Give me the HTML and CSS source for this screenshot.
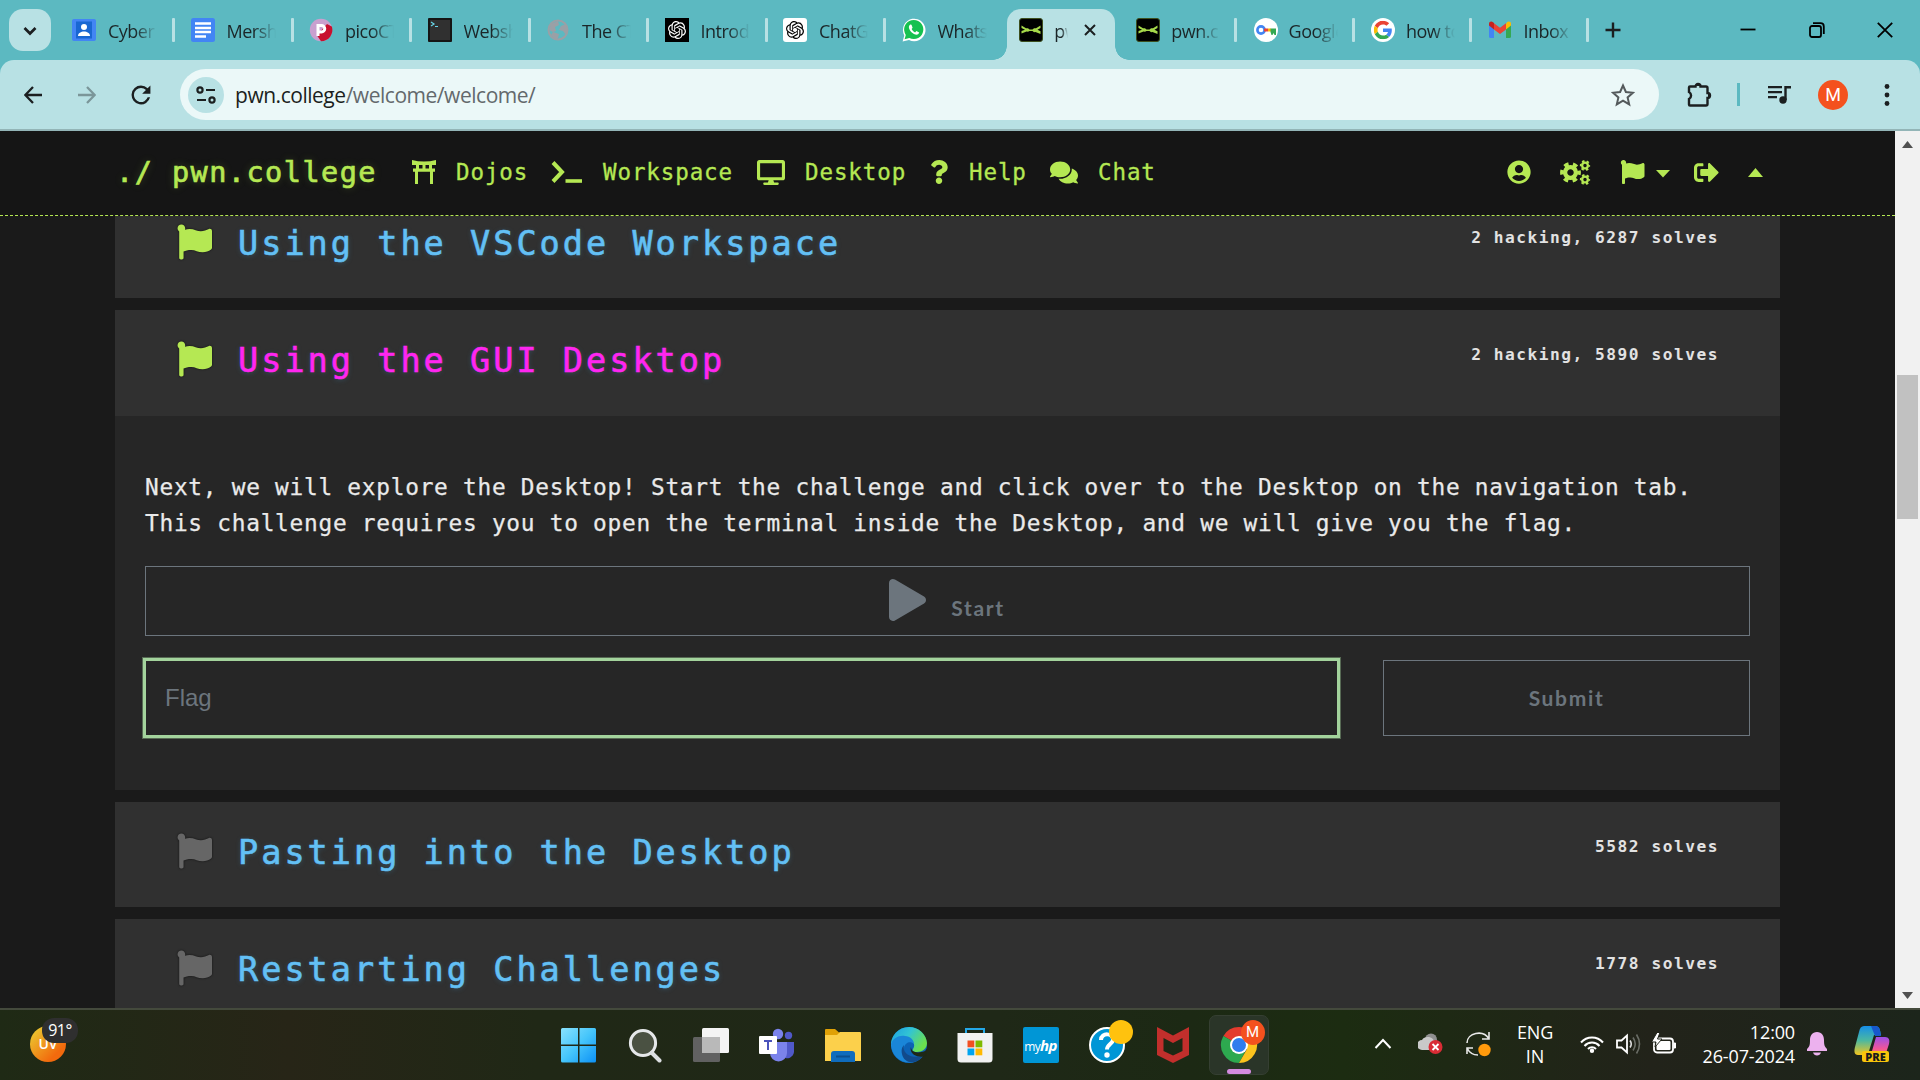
FILE: index.html
```html
<!DOCTYPE html>
<html lang="en">
<head>
<meta charset="utf-8">
<title>pwn.college</title>
<link rel="stylesheet" href="styles.css">
</head>
<body>
<svg class="defs" width="0" height="0" aria-hidden="true">
  <symbol id="flag" viewBox="0 0 512 512"><path d="M349.565 98.783C295.978 98.783 251.721 64 184.348 64c-24.955 0-47.309 4.384-68.045 12.013a55.947 55.947 0 0 0 3.586-23.562C118.117 24.015 94.806 1.206 66.338.048 34.345-1.254 8 24.296 8 56c0 19.026 9.497 35.825 24 45.945V488c0 13.255 10.745 24 24 24h16c13.255 0 24-10.745 24-24v-94.4c28.311-12.064 63.582-22.122 114.435-22.122 53.588 0 97.844 34.783 165.217 34.783 48.169 0 86.667-16.294 122.505-40.858C506.84 359.452 512 349.571 512 339.045v-243.1c0-23.393-24.269-38.87-45.485-29.016-34.338 15.948-76.454 31.854-116.95 31.854z"/></symbol>
  <symbol id="knot" viewBox="0 0 24 24"><path d="M22.2819 9.8211a5.9847 5.9847 0 0 0-.5157-4.9108 6.0462 6.0462 0 0 0-6.5098-2.9A6.0651 6.0651 0 0 0 4.9807 4.1818a5.9847 5.9847 0 0 0-3.9977 2.9 6.0462 6.0462 0 0 0 .7427 7.0966 5.98 5.98 0 0 0 .511 4.9107 6.051 6.051 0 0 0 6.5146 2.9001A5.9847 5.9847 0 0 0 13.2599 24a6.0557 6.0557 0 0 0 5.7718-4.2058 5.9894 5.9894 0 0 0 3.9977-2.9001 6.0557 6.0557 0 0 0-.7475-7.0729zm-9.022 12.6081a4.4755 4.4755 0 0 1-2.8764-1.0408l.1419-.0804 4.7783-2.7582a.7948.7948 0 0 0 .3927-.6813v-6.7369l2.02 1.1686a.071.071 0 0 1 .038.052v5.5826a4.504 4.504 0 0 1-4.4945 4.4944zm-9.6607-4.1254a4.4708 4.4708 0 0 1-.5346-3.0137l.142.0852 4.783 2.7582a.7712.7712 0 0 0 .7806 0l5.8428-3.3685v2.3324a.0804.0804 0 0 1-.0332.0615L9.74 19.9502a4.4992 4.4992 0 0 1-6.1408-1.6464zM2.3408 7.8956a4.485 4.485 0 0 1 2.3655-1.9728V11.6a.7664.7664 0 0 0 .3879.6765l5.8144 3.3543-2.0201 1.1685a.0757.0757 0 0 1-.071 0l-4.8303-2.7865A4.504 4.504 0 0 1 2.3408 7.872zm16.5963 3.8558L13.1038 8.364 15.1192 7.2a.0757.0757 0 0 1 .071 0l4.8303 2.7913a4.4944 4.4944 0 0 1-.6765 8.1042v-5.6772a.79.79 0 0 0-.407-.667zm2.0107-3.0231l-.142-.0852-4.7735-2.7818a.7759.7759 0 0 0-.7854 0L9.409 9.2297V6.8974a.0662.0662 0 0 1 .0284-.0615l4.8303-2.7866a4.4992 4.4992 0 0 1 6.6802 4.66zM8.3065 12.863l-2.02-1.1638a.0804.0804 0 0 1-.038-.0567V6.0742a4.4992 4.4992 0 0 1 7.3757-3.4537l-.142.0805L8.704 5.459a.7948.7948 0 0 0-.3927.6813zm1.0976-2.3654l2.602-1.4998 2.6069 1.4998v2.9994l-2.5974 1.4997-2.6067-1.4997Z"/></symbol>
  <symbol id="pwn" viewBox="0 0 24 24"><rect x=".5" y=".5" width="23" height="23" rx="2.500" fill="#000" stroke="#3d4f1e"/><path d="M2.500 7.500 7 10.200h2l1.500 1.200h3l1.500-1.200h2l4.500-2.700v2.500l-3 1.700 3 1.500v2.700l-5-2-1.500.3-1.500-1.200h-3L9 13.700l-1.500-.3-5 2V13l3.500-1.200L2.500 10z" fill="#a6d94a"/></symbol>
  <symbol id="gear" viewBox="-12 -12 24 24"><circle r="6.200" fill="none" stroke="currentColor" stroke-width="5"/><circle r="9.800" fill="none" stroke="currentColor" stroke-width="4.200" stroke-dasharray="5.200 5.063" stroke-dashoffset="2.600"/></symbol>
</svg>

<header class="browser">
  <div class="tabstrip">
    <button class="tab-search"><svg width="42" height="42" viewBox="0 0 42 42"><path d="M15.500 19l5.500 5.500 5.500-5.500" fill="none" stroke="#1b1f20" stroke-width="2.700"/></svg></button>
    <div class="tab"><svg class="fav" viewBox="0 0 24 24"><rect y="1" width="24" height="22" rx="2" fill="#4285f4"/><rect x="4" y="3.500" width="16" height="17" fill="#1967d2"/><circle cx="12" cy="9" r="3" fill="#fff"/><path d="M6 18c0-6 12-6 12 0z" fill="#fff"/></svg><span class="label">Cyber</span></div>
    <div class="tab"><svg class="fav" viewBox="0 0 24 24"><rect width="24" height="24" rx="2.500" fill="#4285f4"/><path d="M4 5.500h16M4 10h16M4 14h16M4 18.500h11" stroke="#fff" stroke-width="2.300"/></svg><span class="label">Mersh</span></div>
    <div class="tab"><svg class="fav" viewBox="0 0 24 24"><circle cx="12" cy="12" r="11.200" fill="#c9a0cf"/><path d="M8 17.500L18 6l4.800 2.500A11.200 11.200 0 0 1 12 23.200z" fill="#c8102e"/><path d="M9 18V7.500h3.500a3.200 3.200 0 0 1 0 6.500H9" fill="none" stroke="#fff" stroke-width="3"/></svg><span class="label">picoCT</span></div>
    <div class="tab"><svg class="fav" viewBox="0 0 24 24"><rect width="24" height="24" rx="1" fill="#151515"/><rect x="2" y="2" width="20" height="20" fill="#303030"/><path d="M3 4l3 2-3 2M7 8.500h3" fill="none" stroke="#68d4e6" stroke-width="1.200"/></svg><span class="label">Websh</span></div>
    <div class="tab"><svg class="fav" viewBox="0 0 24 24"><circle cx="12" cy="12" r="9.500" fill="none" stroke="#9aa0a6" stroke-width="2"/><path d="M5 6l7-3 1 4-4 2 1 4-3 1-4-2zM15 8l5-2 2 6-2 5-3-4-4-1zM7 14l6 2-1 4-2 2-5-5z" fill="#9aa0a6"/></svg><span class="label">The CT</span></div>
    <div class="tab"><svg class="fav" viewBox="0 0 24 24"><rect width="24" height="24"/><svg x="3" y="3" width="18" height="18" fill="#fff"><use href="#knot"/></svg></svg><span class="label">Introd</span></div>
    <div class="tab"><svg class="fav" viewBox="0 0 24 24"><rect width="24" height="24" rx="3" fill="#fff"/><svg x="3" y="3" width="18" height="18"><use href="#knot"/></svg></svg><span class="label">ChatG</span></div>
    <div class="tab no-sep"><svg class="fav" viewBox="0 0 24 24"><path d="M.6 23.400l1.700-6A11.300 11.300 0 1 1 7 22z" fill="#fff"/><path d="M2.600 21.300l1.200-4.400A9.600 9.600 0 1 1 7.300 20z" fill="#16c150"/><path d="M8.200 6.500c-3 2.300-.3 6.500 2.300 8.500 2.800 2.200 5.700 2.500 6.700-.5l-2.800-1.500-1.300 1.400c-1.700-.7-2.700-1.800-3.500-3.300l1-1.300-1.100-3z" fill="#fff"/></svg><span class="label">Whats</span></div>
    <div class="tab active"><svg class="fav"><use href="#pwn"/></svg><span class="label">pw</span><svg class="tab-x" width="12" height="12" viewBox="0 0 12 12"><path d="M1 1l10 10M11 1L1 11" stroke="#1b1f20" stroke-width="2"/></svg></div>
    <div class="tab late"><svg class="fav"><use href="#pwn"/></svg><span class="label">pwn.c</span></div>
    <div class="tab late"><svg class="fav" viewBox="0 0 24 24"><circle cx="12" cy="12" r="12" fill="#fff"/><circle cx="7" cy="12" r="3.600" fill="none" stroke="#4285f4" stroke-width="2.600"/><path d="M10 12h4" stroke="#ea4335" stroke-width="3"/><path d="M14 12h3" stroke="#fbbc04" stroke-width="3"/><path d="M16.500 10.500H22V17h-1.500l-1-2-1 2h-1l-1-3z" fill="#34a853"/></svg><span class="label">Google</span></div>
    <div class="tab late"><svg class="fav" viewBox="0 0 24 24"><circle cx="12" cy="12" r="12" fill="#fff"/><svg x="2.800" y="2.800" width="18.400" height="18.400" viewBox="0 0 48 48"><path fill="#EA4335" d="M24 9.500c3.540 0 6.710 1.220 9.210 3.600l6.850-6.850C35.900 2.380 30.470 0 24 0 14.620 0 6.510 5.380 2.560 13.220l7.980 6.190C12.430 13.720 17.740 9.500 24 9.500z"/><path fill="#4285F4" d="M46.980 24.550c0-1.570-.15-3.090-.38-4.550H24v9.020h12.940c-.58 2.960-2.260 5.480-4.780 7.180l7.730 6c4.510-4.180 7.090-10.360 7.090-17.650z"/><path fill="#FBBC05" d="M10.530 28.590c-.48-1.450-.76-2.990-.76-4.590s.27-3.140.76-4.590l-7.980-6.190C.92 16.460 0 20.120 0 24c0 3.880.92 7.540 2.560 10.780l7.970-6.190z"/><path fill="#34A853" d="M24 48c6.480 0 11.930-2.130 15.890-5.810l-7.730-6c-2.150 1.450-4.920 2.300-8.160 2.300-6.260 0-11.570-4.220-13.470-9.910l-7.980 6.190C6.510 42.620 14.620 48 24 48z"/></svg></svg><span class="label">how to</span></div>
    <div class="tab late"><svg class="fav" viewBox="0 0 24 24"><path d="M1 6v12.500Q1 20 2.500 20H6V9z" fill="#4285f4"/><path d="M18 9v11h3.500q1.500 0 1.500-1.500V6z" fill="#34a853"/><path d="M18 6v5.500l5-4V6c0-2.500-2.500-3-4-1.800z" fill="#fbbc04"/><path d="M6 5.200l6 4.600 6-4.600v6.300L12 16l-6-4.500z" fill="#ea4335"/><path d="M1 6v1.500l5 4V5L5 4.200C3.500 3 1 3.500 1 6z" fill="#c5221f"/></svg><span class="label">Inbox</span></div>
    <svg class="new-tab" width="16" height="16" viewBox="0 0 16 16"><path d="M8 .5v15M.5 8h15" stroke="#1b1f20" stroke-width="2.400"/></svg>
    <div class="win-controls">
      <svg width="16" height="16" viewBox="0 0 16 16"><path d="M.5 7.500h15" stroke="#000" stroke-width="1.800"/></svg>
      <svg width="16" height="16" viewBox="0 0 16 16"><rect x="1" y="4" width="11" height="11" rx="2" fill="none" stroke="#000" stroke-width="1.800"/><path d="M4 1.200h7.500q3.300 0 3.300 3.300V12" fill="none" stroke="#000" stroke-width="1.800"/></svg>
      <svg width="16" height="16" viewBox="0 0 16 16"><path d="M.8.800l14.400 14.400M15.200.800L.8 15.200" stroke="#000" stroke-width="1.800"/></svg>
    </div>
  </div>
  <div class="toolbar">
    <svg class="back" width="18" height="18" viewBox="0 0 18 18"><path d="M18 9H1.500M9 1L1.300 9 9 17" fill="none" stroke="#1b1f20" stroke-width="2.300"/></svg>
    <svg class="forward" width="18" height="18" viewBox="0 0 18 18"><path d="M0 9h16.500M9 1l7.700 8L9 17" fill="none" stroke="#7b9699" stroke-width="2.300"/></svg>
    <svg class="reload" width="20" height="20" viewBox="3.500 3.500 17 17"><path fill="#1b1f20" d="M17.650 6.350A7.958 7.958 0 0 0 12 4a8 8 0 1 0 7.730 10h-2.080A6 6 0 1 1 12 6c1.660 0 3.140.69 4.220 1.780L13 11h7V4z"/></svg>
    <div class="omnibox">
      <span class="site-info"><svg width="20" height="20" viewBox="0 0 20 20" fill="none" stroke="#1b1f20" stroke-width="2.200"><circle cx="4" cy="5" r="2.600"/><path d="M10 5h9M1 15h9"/><circle cx="16" cy="15" r="2.600"/></svg></span>
      <span class="url">pwn.college<span class="path">/welcome/welcome/</span></span>
      <svg class="star" width="24" height="24" viewBox="0 0 24 24"><path d="M12 2.500l2.900 6.500 7.100.7-5.400 4.700 1.600 7L12 17.700l-6.200 3.700 1.600-7L2 9.700 9.100 9z" fill="none" stroke="#545a5c" stroke-width="2"/></svg>
    </div>
    <svg class="puzzle" width="25" height="25" viewBox="0 0 25 25"><path d="M2 5.500Q2 4.500 3 4.500h5.500a2.500 2.500 0 0 1 5 0H19q1.500 0 1.500 1.500v5a2.500 2.500 0 0 1 0 5v6q0 1.500-1.500 1.500H3q-1 0-1-1v-5.500a4 4 0 0 0 0-7z" fill="none" stroke="#1b1f20" stroke-width="2.400"/><path d="M8.500 4a2.300 2.300 0 0 1 4.600 0zM21 11a2.400 2.400 0 0 1 0 5z" fill="#1b1f20"/></svg>
    <span class="bar-sep"></span>
    <svg class="music" width="23" height="20" viewBox="0 0 23 20"><path d="M0 2.200h14M0 7.200h14M0 12.200h9" stroke="#1b1f20" stroke-width="2.200"/><path d="M17.500 15V2.200H23" fill="none" stroke="#1b1f20" stroke-width="2.400"/><circle cx="15" cy="15" r="3.700" fill="#1b1f20"/></svg>
    <span class="avatar">M</span>
    <svg class="dots" width="6" height="22" viewBox="0 0 6 22" fill="#1b1f20"><circle cx="3" cy="2.500" r="2.400"/><circle cx="3" cy="11" r="2.400"/><circle cx="3" cy="19.500" r="2.400"/></svg>
  </div>
</header>

<div class="viewport">
  <div class="page">
    <nav class="nav">
      <a class="logo">./ pwn.college</a>
      <svg class="i-torii" width="24" height="24" viewBox="0 0 24 24" fill="currentColor"><path d="M0 0q12 3 24 0v5H0zM4 4h3v5H4zM10.500 4h3v5h-3zM17 4h3v5h-3zM1 8.500h22v3.300H1zM3 11h3v13H3zM18 11h3v13h-3z"/></svg><span class="t-dojos">Dojos</span>
      <svg class="i-term" width="32" height="24" viewBox="0 0 32 24" fill="none" stroke="currentColor"><path d="M2 2.500l9 9.500-9 9.500" stroke-width="4"/><path d="M14.500 21h16.500" stroke-width="3.600"/></svg><span class="t-work">Workspace</span>
      <svg class="i-desk" width="28" height="25" viewBox="0 0 576 512" fill="currentColor"><path d="M528 0H48C21.500 0 0 21.500 0 48v320c0 26.500 21.500 48 48 48h192l-16 48h-72c-13.300 0-24 10.700-24 24s10.700 24 24 24h272c13.300 0 24-10.700 24-24s-10.700-24-24-24h-72l-16-48h192c26.500 0 48-21.500 48-48V48c0-26.500-21.500-48-48-48zm-16 352H64V64h448v288z"/></svg><span class="t-desk">Desktop</span>
      <svg class="i-help" width="18" height="24" viewBox="0 0 384 512" fill="currentColor"><path d="M202.021 0C122.202 0 70.503 32.703 29.914 91.026c-7.363 10.580-5.093 25.086 5.178 32.874l43.138 32.709c10.373 7.865 25.132 6.026 33.253-4.148 25.049-31.381 43.630-49.449 82.757-49.449 30.764 0 68.816 19.799 68.816 49.631 0 22.552-18.617 34.134-48.993 51.164-35.423 19.860-82.299 44.576-82.299 106.405V320c0 13.255 10.745 24 24 24h72.471c13.255 0 24-10.745 24-24v-5.773c0-42.860 125.268-44.645 125.268-160.627C377.504 66.256 286.902 0 202.021 0zM192 373.459c-38.196 0-69.271 31.075-69.271 69.271 0 38.195 31.075 69.270 69.271 69.270s69.271-31.075 69.271-69.271-31.075-69.270-69.271-69.270z"/></svg><span class="t-help">Help</span>
      <svg class="i-chat" width="28" height="25" viewBox="0 0 576 512" fill="currentColor"><path d="M416 192c0-88.400-93.100-160-208-160S0 103.600 0 192c0 34.300 14.100 65.900 38 92-13.400 30.200-35.500 54.200-35.800 54.500-2.200 2.300-2.800 5.700-1.500 8.700S4.800 352 8 352c36.600 0 66.900-12.300 88.700-25 32.200 15.700 70.300 25 111.300 25 114.900 0 208-71.600 208-160zm122 220c23.900-26 38-57.700 38-92 0-66.900-53.500-124.200-129.300-148.100.9 6.600 1.300 13.300 1.300 20.100 0 105.900-107.700 192-240 192-10.800 0-21.300-.8-31.700-1.900C207.800 439.600 281.800 480 368 480c41 0 79.100-9.200 111.300-25 21.800 12.700 52.100 25 88.700 25 3.200 0 6.100-1.900 7.300-4.800 1.300-2.900.7-6.300-1.500-8.700-.3-.3-22.400-24.200-35.800-54.500z"/></svg><span class="t-chat">Chat</span>
      <div class="nav-right">
        <svg width="24" height="24" viewBox="0 0 496 512" fill="currentColor"><path d="M248 8C111 8 0 119 0 256s111 248 248 248 248-111 248-248S385 8 248 8zm0 96c48.600 0 88 39.400 88 88s-39.400 88-88 88-88-39.400-88-88 39.400-88 88-88zm0 344c-58.700 0-111.300-26.600-146.500-68.200 18.800-35.400 55.600-59.800 98.500-59.800 2.400 0 4.800.4 7.100 1.100 13 4.200 26.600 6.900 40.900 6.900 14.300 0 28-2.700 40.900-6.900 2.300-.7 4.700-1.100 7.100-1.100 42.900 0 79.700 24.400 98.500 59.800C359.300 421.400 306.700 448 248 448z"/></svg>
        <svg class="i-cogs" width="31" height="25" viewBox="0 0 31 25"><svg x="0" y="1.500" width="21" height="22"><use href="#gear"/></svg><svg x="19.500" y="0" width="11" height="11"><use href="#gear"/></svg><svg x="19.500" y="14" width="11" height="11"><use href="#gear"/></svg></svg>
        <svg class="i-navflag" width="25" height="24" fill="currentColor"><use href="#flag"/></svg>
        <svg class="i-down" width="14" height="8" viewBox="0 0 14 8" fill="currentColor"><path d="M0 0h14L7 7.500z"/></svg>
        <svg class="i-out" width="25" height="25" viewBox="0 0 512 512" fill="currentColor"><path d="M497 273L329 441c-15 15-41 4.500-41-17v-96H152c-13.300 0-24-10.700-24-24v-96c0-13.300 10.700-24 24-24h136V88c0-21.400 25.900-32 41-17l168 168c9.300 9.400 9.300 24.600 0 34zM192 436v-40c0-6.600-5.400-12-12-12H96c-17.700 0-32-14.300-32-32V160c0-17.700 14.300-32 32-32h84c6.600 0 12-5.400 12-12V76c0-6.600-5.400-12-12-12H96c-53 0-96 43-96 96v192c0 53 43 96 96 96h84c6.600 0 12-5.400 12-12z"/></svg>
        <svg class="i-up" width="15" height="9" viewBox="0 0 15 9" fill="currentColor"><path d="M0 9h15L7.500 0z"/></svg>
      </div>
    </nav>
    <main class="challenges">
      <section class="card">
        <div class="card-head"><svg class="flag solved"><use href="#flag"/></svg><h4>Using the VSCode Workspace</h4><span class="stats">2 hacking, 6287 solves</span></div>
      </section>
      <section class="card open">
        <div class="card-head"><svg class="flag solved"><use href="#flag"/></svg><h4>Using the GUI Desktop</h4><span class="stats">2 hacking, 5890 solves</span></div>
        <div class="card-body">
          <p>Next, we will explore the Desktop! Start the challenge and click over to the Desktop on the navigation tab. This challenge requires you to open the terminal inside the Desktop, and we will give you the flag.</p>
          <button class="start"><svg width="37" height="42" viewBox="0 0 448 512" preserveAspectRatio="none" fill="currentColor"><path d="M424.400 214.700L72.400 6.600C43.800-10.300 0 6.100 0 47.900V464c0 37.500 40.700 60.100 72.400 41.300l352-208c31.400-18.500 31.500-64.100 0-82.600z"/></svg><span>Start</span></button>
          <div class="submit-row">
            <input class="flag-input" type="text" placeholder="Flag">
            <button class="submit">Submit</button>
          </div>
        </div>
      </section>
      <section class="card">
        <div class="card-head"><svg class="flag"><use href="#flag"/></svg><h4>Pasting into the Desktop</h4><span class="stats">5582 solves</span></div>
      </section>
      <section class="card">
        <div class="card-head"><svg class="flag"><use href="#flag"/></svg><h4>Restarting Challenges</h4><span class="stats">1778 solves</span></div>
      </section>
    </main>
  </div>
  <div class="scrollbar">
    <svg width="11" height="7" viewBox="0 0 11 7"><path d="M0 7h11L5.500 0z" fill="#505050"/></svg>
    <div class="thumb"></div>
    <svg class="sb-down" width="11" height="7" viewBox="0 0 11 7"><path d="M0 0h11L5.500 7z" fill="#505050"/></svg>
  </div>
</div>

<footer class="taskbar">
  <div class="weather"><span class="sun">UV</span><span class="temp">91°</span></div>
  <div class="apps">
    <svg viewBox="0 0 36 36"><defs><linearGradient id="win" gradientUnits="userSpaceOnUse" x1="0" y1="0" x2="36" y2="36"><stop offset="0" stop-color="#8be3fd"/><stop offset=".5" stop-color="#45c5fb"/><stop offset="1" stop-color="#0a8ff5"/></linearGradient></defs><path d="M1.500 1H17v16.500H0v-15Q0 1 1.500 1zM18.500 1H33.500Q35 1 35 2.500v15H18.500zM0 19h17v16.500H1.500Q0 35.500 0 34zM18.500 19H35v15q0 1.500-1.500 1.500h-15z" fill="url(#win)"/></svg>
    <svg viewBox="0 0 36 36"><circle cx="16" cy="16" r="12.600" fill="#4a5142" stroke="#e6e8ea" stroke-width="3"/><path d="M25 26l7.500 7.500" stroke="#dcdfe2" stroke-width="4" stroke-linecap="round"/></svg>
    <svg viewBox="0 0 36 36"><rect x="0" y="10" width="27" height="25" rx="1.500" fill="#616161"/><rect x="9" y="1" width="27" height="25" rx="1.500" fill="#f4f4f4"/><path d="M9 10h18v16H9z" fill="#b9b9b9"/></svg>
    <svg viewBox="0 0 36 36"><circle cx="19" cy="7" r="5.200" fill="#7b83eb"/><circle cx="29.500" cy="8.500" r="3.700" fill="#5059c9"/><path d="M24 15h11v10a7 7 0 0 1-11 5z" fill="#5059c9"/><path d="M11 15h17v11a8.500 8.500 0 0 1-17 0z" fill="#7b83eb"/><rect x="0" y="9" width="18" height="18" rx="1" fill="#fff"/><path d="M5 14h8M9 14v9" stroke="#4b53bc" stroke-width="2"/></svg>
    <svg viewBox="0 0 36 36"><path d="M0 3q0-1 1-1h9l4 3.500h20q2 0 2 2V12H0z" fill="#e0a106"/><path d="M0 8h12l3-3h20q1 0 1 1v28H0z" fill="#fcd04b"/><path d="M6 35V27q0-3 3-3h18q3 0 3 3v8z" fill="#0f6cbd"/><path d="M11 29.500h14" stroke="#0b4f8f" stroke-width="2"/></svg>
    <svg viewBox="0 0 36 36"><defs><linearGradient id="edg" x1="0" y1="0" x2="1" y2=".5"><stop offset="0" stop-color="#1b9de2"/><stop offset=".5" stop-color="#32c4d4"/><stop offset="1" stop-color="#6be04e"/></linearGradient></defs><circle cx="18" cy="18" r="18" fill="#0c62b5"/><path d="M18 0a18 18 0 0 1 18 16c0 6-5 9-10 9-4 0-5-1-4-3 3-4 0-10-7-10C7 12 2 16 0 20A18 18 0 0 1 18 0z" fill="url(#edg)"/><path d="M0 17c2-6 8-9 14-8 5 0 9 4 9 8-3-3-9-2-10 4-1 7 5 12 10 14-12 3-23-6-23-18z" fill="#1a86d8"/><path d="M13 18c-2 8 6 14 19 11-7 9-19 8-21-2-1-4 0-7 2-9z" fill="#114a8b"/><path d="M20 20c0 5 6 7 14 4l2.500-3V28l-3 1.500C26 31 18 27 20 20z" fill="#1e2716"/></svg>
    <svg viewBox="0 0 36 36"><path d="M9 8V2h18v6" fill="none" stroke="#24a8e8" stroke-width="2"/><path d="M.5 6h35v26q0 3.500-3.500 3.500H4Q.5 35.500.5 32z" fill="#f1f1f1"/><path d="M10.500 13.500h6.800v6.800h-6.800z" fill="#f25022"/><path d="M18.500 13.500h6.800v6.800h-6.800z" fill="#7fba00"/><path d="M10.500 21.500h6.800v6.800h-6.800z" fill="#00a4ef"/><path d="M18.500 21.500h6.800v6.800h-6.800z" fill="#ffb900"/></svg>
    <span class="myhp">my<b>hp</b></span>
    <svg class="overflowing" viewBox="0 0 36 36"><circle cx="18" cy="18" r="17" fill="#0096d6" stroke="#fff" stroke-width="2"/><path d="M12 13c0-8 13-7 12 0-.5 4-6 4.500-6 9.500" fill="none" stroke="#fff" stroke-width="4"/><circle cx="18" cy="28" r="2.700" fill="#fff"/><circle cx="32" cy="5" r="12" fill="#ffc20e"/></svg>
    <svg viewBox="0 0 36 36"><path d="M2 0l16 8.500L34 0v28L18 36 2 28zM8.500 11v13l9.500 4.500 9.500-4.500V11L18 16z" fill="#c22f2c" fill-rule="evenodd"/></svg>
    <div class="chrome-app">
      <svg class="overflowing" viewBox="0 0 36 36"><path d="M18 18L2.400 9A18 18 0 0 1 33.600 9z" fill="#e33b2e"/><path d="M18 18L2.400 9A18 18 0 0 0 18 36l6-11z" fill="#2da94f"/><path d="M18 9h15.600A18 18 0 0 1 18 36l8-14z" fill="#fcc31e"/><circle cx="18" cy="18" r="9" fill="#fff"/><circle cx="18" cy="18" r="7" fill="#2f7ded"/></svg>
      <span class="profile">M</span>
    </div>
  </div>
  <div class="tray">
    <svg width="18" height="12" viewBox="0 0 18 12"><path d="M1.500 10L9 2l7.500 8" fill="none" stroke="#fff" stroke-width="2"/></svg>
    <svg class="cloud" width="25" height="22" viewBox="0 0 25 22"><circle cx="13" cy="6.500" r="6" fill="#8f8f8f"/><path d="M4 17a5 5 0 0 1 0-10c3-5 12-3 12 2 4 0 4 8 0 8z" fill="#c9c9c9"/><circle cx="17.500" cy="14" r="7" fill="#d92c35"/><path d="M14.500 11l6 6M20.500 11l-6 6" stroke="#fff" stroke-width="1.800"/></svg>
    <svg class="sync" width="25" height="27" viewBox="0 0 25 27"><path d="M1 12C1 2 17-2 23 8M23 1v7h-7M1 23v-6h6M1 17c3 6 7 7 11 7" fill="none" stroke="#e8e8e8" stroke-width="1.600"/><circle cx="18.500" cy="19" r="6.200" fill="#ff9a0c"/></svg>
    <span class="lang">ENG<br>IN</span>
    <svg class="wifi" width="24" height="18" viewBox="0 0 24 18" fill="none" stroke="#fff" stroke-width="2"><path d="M1 7.500a14.500 14.500 0 0 1 22 0M4.500 11a10 10 0 0 1 15 0M8 14a5.500 5.500 0 0 1 8 0"/><circle cx="12" cy="15.700" r="1.200" fill="#fff"/></svg>
    <svg class="vol" width="25" height="22" viewBox="0 0 25 22" fill="none"><path d="M1 7.500h4.500L11 2.500v17L5.500 14.500H1z" stroke="#fff" stroke-width="1.800"/><path d="M14 7.500q2.500 3.500 0 7" stroke="#ddd" stroke-width="1.600"/><path d="M17 4.500q4.500 6.500 0 13M20.500 1.500q6 9.500 0 19" stroke="#6a6d66" stroke-width="1.600"/></svg>
    <svg class="bat" width="25" height="22" viewBox="0 0 25 22"><rect x="2" y="5.500" width="19" height="14" rx="3" fill="none" stroke="#fff" stroke-width="1.800"/><rect x="4.500" y="8" width="14" height="9" rx="1" fill="#fff"/><path d="M22 10h1.500v5H22z" fill="#fff" stroke="#fff"/><path d="M5-.5L-.5 9H4l-1 5 7-8H5.500L8-.5z" fill="#fff" stroke="#1f231a"/></svg>
    <span class="clock">12:00<br>26-07-2024</span>
    <svg class="bell" width="20" height="24" viewBox="0 0 20 24" fill="#ecb1ee"><path d="M10 0c5 0 7 4 7 8 0 6 1 7 3 9v2H0v-2c2-2 3-3 3-9 0-4 2-8 7-8zM6 20.500h8q-1 3-4 3t-4-3z"/></svg>
    <div class="copilot"><svg width="36" height="32" viewBox="0 0 36 32"><defs><linearGradient id="cpa" x1="0" y1="0" x2="0" y2="1"><stop offset="0" stop-color="#168fe8"/><stop offset=".5" stop-color="#4cb8a0"/><stop offset="1" stop-color="#f4c51c"/></linearGradient><linearGradient id="cpb" x1="0" y1="0" x2="0" y2="1"><stop offset="0" stop-color="#9b50e8"/><stop offset=".6" stop-color="#f0559a"/><stop offset="1" stop-color="#fb8a4a"/></linearGradient></defs><path d="M10 0h11c5 0 5 4 6 9h-7l-5 16q-1 4-5 4H4c-4 0-4-4-3-8L5 6q1-6 5-6z" fill="url(#cpa)"/><path d="M17 0h4c5 0 5 4 6 10h-6z" fill="#1758cc"/><path d="M22 11h9c4 0 5 3 4 7l-4 12H13q4 0 5-5z" fill="url(#cpb)"/></svg><span class="pre">PRE</span></div>
  </div>
</footer>
</body>
</html>
```
FILE: styles.css
```css
* { box-sizing: border-box; }
html, body { margin: 0; height: 100%; }
body {
  width: 1920px;
  height: 1080px;
  overflow: hidden;
  display: flex;
  flex-direction: column;
  background: #1a1a1a;
  font-family: "Open Sans", "Noto Sans", sans-serif;
}
button { font: inherit; padding: 0; border: 0; background: none; }
svg { display: block; flex: none; }
.defs { position: absolute; }

/* browser frame */
.browser { flex: none; height: 131px; background: #5cb9c1; border-bottom: 2px solid #93b5b7; }
.tabstrip { display: flex; align-items: flex-start; height: 60px; padding: 9px 0 0 9px; }
.tab-search { width: 42px; height: 42px; border-radius: 14px; background: #b8e1e4; margin-right: 21px; flex: none; }
.tab { position: relative; display: flex; align-items: center; width: 118.500px; height: 42px; flex: none; }
.tab.late { width: 117.400px; }
.tab::after { content: ""; flex: none; width: 3px; height: 24px; border-radius: 1px; background: #b8e1e4; margin-left: 15px; }
.tab.late::after { margin-left: 14px; }
.tab.no-sep::after { background: none; }
.fav { width: 24px; height: 24px; }
.label {
  flex: none;
  width: 49px;
  margin-left: 12px;
  overflow: hidden;
  white-space: nowrap;
  font-size: 18px;
  line-height: 30px;
  letter-spacing: -0.500px;
  color: #1b2628;
  padding-top: 1px;
  -webkit-mask-image: linear-gradient(90deg, #000 55%, transparent 100%);
  mask-image: linear-gradient(90deg, #000 55%, transparent 100%);
}
.late .label { margin-left: 11px; }
.tab.active {
  width: 108px;
  height: 51px;
  margin: 0 21px 0 -12.800px;
  padding: 0 0 9px 12px;
  border-radius: 14px 14px 0 0;
  background: #b8e1e4;
}
.active .label { width: 14px; margin-left: 11px; }
.tab-x { margin-left: 16px; }
.tab.active::before, .tab.active::after {
  content: "";
  position: absolute;
  bottom: 0;
  width: 14px;
  height: 14px;
  margin: 0;
  border-radius: 0;
}
.tab.active::before { left: -14px; background: radial-gradient(circle at 0 0, transparent 13.500px, #b8e1e4 14px); }
.tab.active::after { right: -14px; background: radial-gradient(circle at 100% 0, transparent 13.500px, #b8e1e4 14px); }
.new-tab { margin: 13px 0 0 -1px; }
.win-controls { display: flex; gap: 52.500px; margin: 13px 27px 0 auto; }
.toolbar { display: flex; align-items: center; height: 69px; padding: 0 30px 0 24px; background: #b8e1e4; border-radius: 14px 14px 0 0; }
.forward { margin-left: 36px; }
.reload { margin-left: 35px; }
.omnibox { display: flex; align-items: center; width: 1479px; height: 51px; margin-left: 29px; padding: 0 24px 0 8px; border-radius: 26px; background: #ebf8f8; }
.site-info { display: flex; align-items: center; justify-content: center; width: 36px; height: 36px; border-radius: 50%; background: #b8e1e4; }
.url { margin-left: 11px; font-size: 21px; letter-spacing: -0.470px; color: #1b1f20; white-space: nowrap; }
.url .path { color: #63696c; }
.star { margin-left: auto; }
.puzzle { margin-left: 28px; }
.bar-sep { width: 3px; height: 23px; margin-left: 25px; background: #5cb9c1; }
.music { margin-left: 28px; }
.avatar { width: 30px; height: 30px; margin-left: 27px; border-radius: 50%; background: #f4511e; color: #fff; font: 18px/30px Roboto, sans-serif; text-align: center; }
.dots { margin-left: 36px; }

/* page */
.viewport { display: flex; height: 877px; flex: none; }
.page { width: 1895px; overflow: hidden; background: #1a1a1a; font-family: "DejaVu Sans Mono", monospace; }
.nav {
  position: relative;
  z-index: 1;
  display: flex;
  align-items: center;
  height: 85px;
  padding: 0 132px 2px 116px;
  background: #151515;
  border-bottom: 1px dashed #b5e853;
  color: #b5e853;
  font-size: 22.500px;
  letter-spacing: 0.900px;
  -webkit-text-stroke: 0.300px #b5e853;
  white-space: nowrap;
}
.logo { width: 261px; font-size: 28.500px; letter-spacing: 1.480px; -webkit-text-stroke: 0.700px #b5e853; text-shadow: 0 0 8px rgba(181, 232, 83, .25); }
.i-torii { margin-left: 35px; }
.t-dojos { width: 73px; margin-left: 20px; }
.i-term { margin-left: 22px; }
.t-work { width: 131px; margin-left: 20px; }
.i-desk { margin-left: 23px; }
.t-desk { width: 102px; margin-left: 20px; }
.i-help { margin-left: 23px; }
.t-help { width: 59px; margin-left: 21px; }
.i-chat { margin-left: 22px; }
.t-chat { margin-left: 20px; }
.nav-right { display: flex; align-items: center; margin-left: auto; }
.i-cogs { margin-left: 29px; }
.i-navflag { margin-left: 29px; }
.i-down { margin: 4px 0 0 11px; }
.i-out { margin-left: 24px; }
.i-up { margin: 0 0 0 29px; }

.challenges { display: flex; flex-direction: column; gap: 12px; width: 1665px; margin: -23px 0 0 115px; }
.card-head { display: flex; align-items: flex-start; height: 105px; padding: 30px 62px 0 62px; background: #303030; }
.open .card-head { height: 106px; }
.flag { width: 35px; height: 36px; margin-top: 1px; fill: #666; filter: drop-shadow(0 0 1px #111); }
.flag.solved { fill: #b5e853; }
h4 {
  margin: 0 0 0 26px;
  font-size: 33.500px;
  line-height: 42px;
  font-weight: 400;
  letter-spacing: 3.030px;
  color: #63c0f5;
  -webkit-text-stroke: 0.600px currentColor;
  text-shadow: 0 1px 5px rgba(60, 130, 170, .4);
  white-space: nowrap;
}
.open h4 { color: #ff26f0; }
.stats { margin: 5px -1px 0 auto; font-size: 16.200px; line-height: 20px; font-weight: 700; letter-spacing: 1.520px; color: #e2e2e2; white-space: nowrap; }
.card-body { height: 374px; padding: 53px 30px 0; background: #262626; color: #eaeaea; }
p { margin: 0 -10px 25px 0; font-size: 22.800px; line-height: 36px; letter-spacing: 0.730px; -webkit-text-stroke: 0.250px currentColor; }
.start, .submit { border: 1px solid #6c757d; color: #6c757d; font: 700 21px/30px Lato, sans-serif; letter-spacing: 1.650px; }
.start { display: flex; justify-content: center; width: 1605px; height: 70px; padding: 12px 1px 0 0; }
.start span { margin: 14px 0 0 25px; }
.submit-row { display: flex; align-items: center; justify-content: space-between; margin: 22px 0 0 -2px; }
.flag-input {
  width: 1197px;
  height: 80px;
  padding: 0 19px;
  border: 3px solid #a3d39c;
  outline: 0;
  background: transparent;
  box-shadow: 0 0 0 1px rgba(163, 211, 156, .4);
  font: 24px "Liberation Sans", Arial, sans-serif;
  color: #eaeaea;
}
.flag-input::placeholder { color: #6c757d; }
.submit { width: 367px; height: 76px; }

.scrollbar { display: flex; flex-direction: column; align-items: center; width: 25px; padding: 10px 0 9px; background: #f1f1f1; }
.thumb { width: 21px; height: 144px; margin-top: 227px; background: #c1c1c1; }
.sb-down { margin-top: auto; }

/* taskbar */
.taskbar {
  flex: none;
  display: flex;
  align-items: center;
  height: 72px;
  padding-left: 30px;
  border-top: 2px solid #444a3c;
  background: linear-gradient(90deg, #1f2a15, #272517 15%, #202816 28%, #1f2817 52%, #1c2914 62%, #1c2c11 70%, #22231a 86%, #1c251b);
  color: #fff;
}
.weather { position: relative; flex: none; width: 48px; height: 44px; align-self: flex-start; margin-top: 8px; }
.sun { position: absolute; left: 0; top: 8px; width: 36px; height: 36px; border-radius: 50%; background: linear-gradient(135deg, #ecc02d 15%, #f26a0d 75%); font-size: 14px; font-weight: 600; line-height: 36px; text-align: center; }
.temp { position: absolute; left: 12px; top: 0; width: 36px; height: 25px; border-radius: 12px; background: #2f2f2f; font-size: 16px; line-height: 25px; text-align: center; letter-spacing: -0.500px; }
.apps { display: flex; flex: none; gap: 30px; margin: 0 0 1px 482.500px; }
.apps svg { width: 36px; height: 36px; }
.overflowing { overflow: visible; position: relative; }
.myhp { width: 36px; height: 36px; border-radius: 2px; background: #0096d6; font: 12px/36px "Open Sans", sans-serif; letter-spacing: -0.700px; text-align: center; white-space: nowrap; }
.myhp b { font-style: italic; font-size: 15px; }
.chrome-app { position: relative; width: 36px; height: 36px; }
.chrome-app::before { content: ""; position: absolute; inset: -12px; border: 1px solid #353f32; border-radius: 7px; background: #2a3528; }
.chrome-app::after { content: ""; position: absolute; left: 6px; top: 42px; width: 24px; height: 5px; border-radius: 3px; background: #d48be0; }
.profile { position: absolute; left: 20px; top: -7px; width: 24px; height: 25px; border-radius: 50%; background: #f4511e; font: 15px/25px Roboto, sans-serif; text-align: center; }
.tray { display: flex; flex: none; align-items: center; margin: 0 0 2px 117.500px; font-size: 18px; line-height: 24px; letter-spacing: -0.150px; }
.cloud { margin-left: 26px; }
.sync { margin-left: 23px; }
.lang { width: 44px; margin-left: 22px; text-align: center; }
.wifi { margin-left: 23px; }
.vol { margin-left: 12px; }
.bat { margin-left: 11px; }
.clock { width: 110px; margin-left: 8px; text-align: right; white-space: nowrap; }
.bell { margin-left: 12px; }
.copilot { position: relative; width: 36px; height: 36px; margin-left: 27px; }
.pre { position: absolute; left: 8px; top: 25px; width: 27px; height: 11px; border-radius: 2px; background: #f9c50c; color: #1b1b1b; font-size: 11px; line-height: 11px; font-weight: 800; letter-spacing: 0; text-align: center; }
```
